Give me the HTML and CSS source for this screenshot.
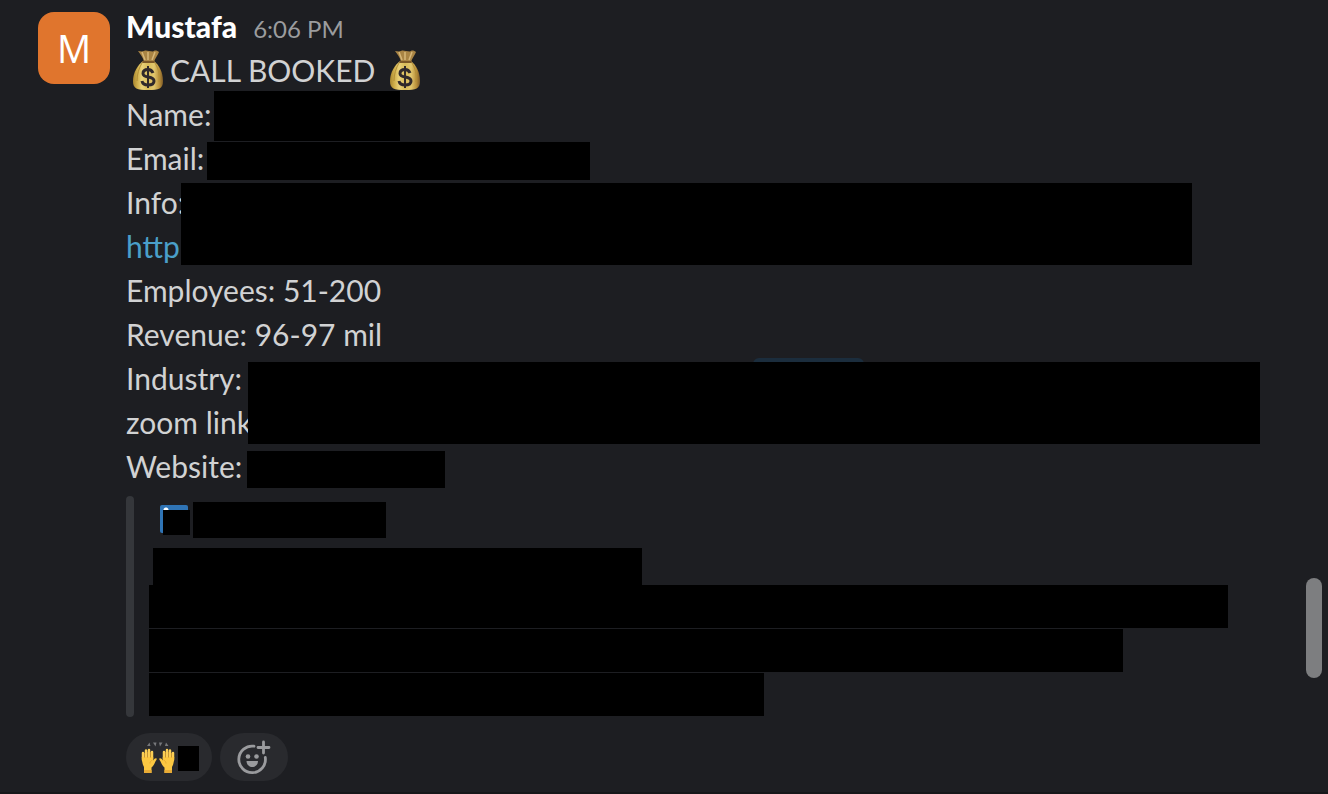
FILE: index.html
```
<!DOCTYPE html>
<html lang="en">
<head>
    <meta charset="UTF-8">
    <meta name="viewport" content="width=device-width, initial-scale=1.0">
    <title>Call booked</title>
    <link rel="stylesheet" href="styles.css">
</head>
<body>
    <!-- shared emoji -->
    <svg class="defs" width="0" height="0" aria-hidden="true">
        <defs>
            <linearGradient id="gold" x1="0" x2="1" y1="0" y2="0">
                <stop offset="0" stop-color="#a8862f"/>
                <stop offset="0.15" stop-color="#d0b04c"/>
                <stop offset="0.3" stop-color="#ead27a"/>
                <stop offset="0.5" stop-color="#d8bb59"/>
                <stop offset="0.7" stop-color="#e2c76d"/>
                <stop offset="0.88" stop-color="#b98f3a"/>
                <stop offset="1" stop-color="#7d5b28"/>
            </linearGradient>
            <symbol id="money-bag" viewBox="0 0 44 44">
                <path d="M12 1c2 0 4 1 6 0s3 0 5 0 4 1 5 0 4 0 5 1c-1 3-4 6-5 10h-10c-1-5-4-8-6-11z" fill="#a98444"/>
                <path d="M16 2l3 8M22 2v8M29 2l-3 8" stroke="#d6b678" stroke-width="1.5" fill="none"/>
                <path d="M17 11h11c5 4 9 11 9 20 0 8-4 9-15 9S7 39 7 31c0-9 5-16 10-20z" fill="url(#gold)"/>
                <path d="M16 13c-3 5-5 11-5 18M29 13c3 5 5 11 4 19" stroke="#b28f38" stroke-width="1" fill="none"/>
                <path d="M17 12h11" stroke="#7b5726" stroke-width="2" stroke-linecap="round"/>
                <path d="M27 23C26 20.500 24.500 19.500 22 19.500C19 19.500 17 21 17 23.500C17 29 28 25 28 31C28 33.500 25.500 35 22 35C18.500 35 16.500 33.500 16 31" fill="none" stroke="#30292b" stroke-width="3"/>
                <path d="M22 16v22" stroke="#30292b" stroke-width="2"/>
            </symbol>
        </defs>
    </svg>

    <main class="message">
        <div class="avatar">M</div>

        <div class="content">
            <header class="message-header">
                <span class="author">Mustafa</span>
                <time class="time">6:06 PM</time>
            </header>

            <div class="lines">
                <p class="line">
                    <svg class="emoji" role="img" aria-label="money bag"><use href="#money-bag"/></svg>
                    <span>CALL BOOKED</span>
                    <svg class="emoji emoji-end" role="img" aria-label="money bag"><use href="#money-bag"/></svg>
                </p>
                <p class="line">Name:<span class="redact redact-name"></span></p>
                <p class="line">Email:<span class="redact redact-email"></span></p>
                <p class="line">Info:<span class="redact redact-info"></span></p>
                <p class="line"><a href="#">http</a></p>
                <p class="line">Employees: 51-200</p>
                <p class="line">Revenue: 96-97 mil</p>
                <p class="line">Industry:<span class="highlight"></span><span class="redact redact-industry"></span></p>
                <p class="line">zoom link</p>
                <p class="line">Website:<span class="redact redact-website"></span></p>
            </div>

            <section class="attachment">
                <div class="attachment-source">
                    <span class="favicon"></span>
                    <span class="bar bar-source"></span>
                </div>
                <div class="bar bar-title"></div>
                <div class="attachment-text">
                    <div class="bar bar-first"></div>
                    <div class="bar bar-second"></div>
                    <div class="bar bar-third"></div>
                </div>
            </section>

            <div class="reactions">
                <button class="reaction" type="button" aria-label="Raised hands">
                    <svg class="hands" viewBox="0 0 36 36" aria-hidden="true">
                        <path d="M7 6l2.500-3.500 1 3.500zM13 2.500h3.500l-1 4zM19 2.500h3.500l-2.500 4zM25 6l1-3.500 2.500 3.500z" fill="#77787b"/>
                        <g id="hand">
                            <path d="M3 20V13M6 19V10.500M9 19V10M12 19V12" stroke="#fbcf55" stroke-width="2.500" stroke-linecap="round" fill="none"/>
                            <path d="M1.800 17h11.400v3.500c1-1.500 2-2.500 3.300-2 .8.500-.5 1.800-1.300 3.500-1 2.500-2.200 4.500-3.700 5.500v5.500h-7.500v-6c-1.500-2.500-2.200-6-2.200-10z" fill="#fbc842"/>
                            <path d="M4.500 13v5M7.500 12v6M10.500 12v6M12.500 20c-1.500.5-2.500 2-2.500 3.500" stroke="#dda12f" stroke-width="0.7" fill="none"/>
                            <path d="M4 30h7.500v3H4z" fill="#e8ab35"/>
                        </g>
                        <use href="#hand" transform="translate(36 0) scale(-1 1)"/>
                    </svg>
                    <span class="bar bar-count"></span>
                </button>
                <button class="reaction add-reaction" type="button" aria-label="Add reaction">
                    <svg class="smile" viewBox="0 0 36 36" aria-hidden="true">
                        <path d="M18 6.200A13.300 13.300 0 1 0 29.300 17.500" fill="none" stroke="#9a9b9e" stroke-width="2.800" stroke-linecap="round"/>
                        <path d="M27.500 2v11M22 7.500h11" fill="none" stroke="#9a9b9e" stroke-width="2.800" stroke-linecap="round"/>
                        <circle cx="12" cy="16.500" r="2.300" fill="#9a9b9e"/>
                        <circle cx="20.500" cy="16.500" r="2.300" fill="#9a9b9e"/>
                        <path d="M10.500 21h11.500c0 3.500-2.500 6-5.700 6s-5.800-2.500-5.800-6z" fill="#9a9b9e"/>
                    </svg>
                </button>
            </div>
        </div>
    </main>
    <div class="scroll-thumb"></div>
</body>
</html>
```
FILE: styles.css
```
* {
    box-sizing: border-box;
}

body {
    margin: 0;
    min-height: 100vh;
    position: relative;
    background-color: #1d1e22;
    border-bottom: 2px solid #16171a;
    color: #d1d2d3;
    font-family: Lato, sans-serif;
    font-size: 30px;
    line-height: 44px;
    overflow: hidden;
}

.defs {
    position: absolute;
}

.message {
    display: flex;
    gap: 16px;
    padding: 4px 38px 8px;
}

.avatar {
    flex: none;
    width: 72px;
    height: 72px;
    margin-top: 8px;
    border-radius: 16px;
    background-color: #e0752d;
    color: #fff;
    font-family: "Open Sans", sans-serif;
    font-size: 38px;
    line-height: 72px;
    text-align: center;
}

.content {
    flex: 1;
    min-width: 0;
}

.message-header {
    display: flex;
    align-items: baseline;
    gap: 16px;
    height: 44px;
}

.author {
    color: #fff;
    font-weight: 900;
}

.time {
    color: #9b9c9e;
    font-size: 24px;
}

.line {
    position: relative;
    height: 44px;
    margin: 0;
    white-space: nowrap;
}

.line:first-child {
    display: flex;
}

.line a {
    color: #4a9fc9;
    text-decoration: none;
}

.emoji {
    width: 44px;
    height: 44px;
    margin-top: 2px;
}

.emoji-end {
    margin-left: 8px;
}

/* blacked-out values sit over the message text */
.redact {
    position: absolute;
    z-index: 1;
    background-color: #000;
}

.redact-name {
    left: 88px;
    top: -1px;
    width: 186px;
    height: 50px;
}

.redact-email {
    left: 81px;
    top: 6px;
    width: 383px;
    height: 38px;
}

.redact-info {
    left: 55px;
    top: 3px;
    width: 1011px;
    height: 82px;
}

.redact-industry {
    left: 122px;
    top: 6px;
    width: 1012px;
    height: 82px;
}

.redact-website {
    left: 121px;
    top: 7px;
    width: 198px;
    height: 37px;
}

.highlight {
    position: absolute;
    left: 627px;
    top: 2px;
    width: 111px;
    height: 36px;
    border-radius: 6px;
    background-color: #1b2d3d;
}

.attachment {
    position: relative;
    margin-top: 8px;
    padding: 6px 0 1px 23px;
}

.attachment::before {
    content: "";
    position: absolute;
    left: 0;
    top: 0;
    bottom: 0;
    width: 8px;
    border-radius: 4px;
    background-color: #35373b;
}

.attachment-source {
    display: flex;
    gap: 5px;
    padding-left: 11px;
    margin-bottom: 10px;
}

.favicon {
    position: relative;
    width: 28px;
    height: 28px;
    margin-top: 3px;
    border-radius: 2px;
    background: radial-gradient(circle at 6px 5px, #fff 2px, #2f74b5 3px);
}

.favicon::after {
    content: "";
    position: absolute;
    left: 3px;
    top: 5px;
    width: 27px;
    height: 25px;
    background-color: #000;
}

.bar {
    background-color: #000;
}

.bar-source {
    width: 193px;
    height: 36px;
}

.bar-title {
    width: 489px;
    height: 37px;
    margin-left: 4px;
}

.attachment-text {
    display: grid;
    gap: 1px;
}

.bar-first {
    width: 1079px;
    height: 43px;
}

.bar-second {
    width: 974px;
    height: 43px;
}

.bar-third {
    width: 615px;
    height: 43px;
}

.reactions {
    display: flex;
    gap: 8px;
    margin-top: 16px;
}

.reaction {
    display: flex;
    align-items: center;
    justify-content: center;
    gap: 2px;
    width: 86px;
    height: 48px;
    padding: 2px 0 0;
    border: none;
    border-radius: 24px;
    background-color: #292a2e;
    cursor: pointer;
}

.add-reaction {
    width: 68px;
}

.hands,
.smile {
    width: 36px;
    height: 36px;
}

.bar-count {
    width: 21px;
    height: 25px;
}

.scroll-thumb {
    position: absolute;
    right: 6px;
    top: 578px;
    width: 16px;
    height: 100px;
    border-radius: 8px;
    background-color: #7d7e80;
}
```
